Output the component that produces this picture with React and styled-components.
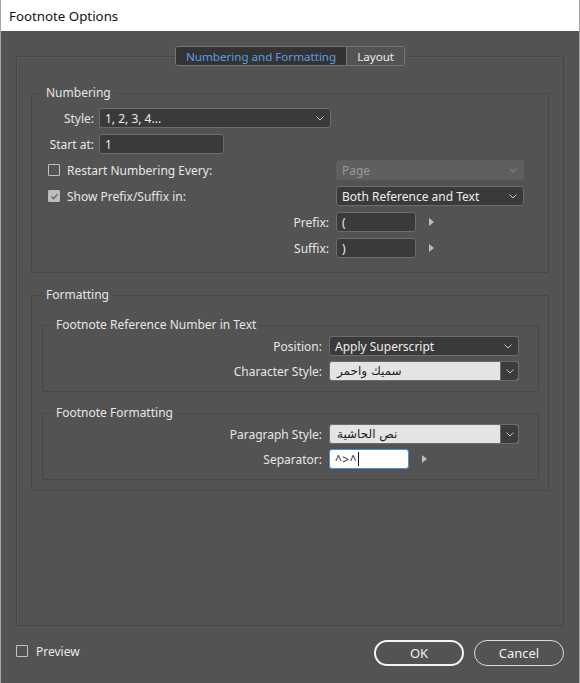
import React from "react"
import styled, { createGlobalStyle } from "styled-components"

const GlobalStyle = createGlobalStyle`
  html, body {
    margin: 0;
    padding: 0;
    background: #535353;
  }
  body {
    font-family: "Noto Sans", "Noto Sans CJK SC", sans-serif;
  }
  * {
    box-sizing: border-box;
  }
`

const Chevron = ({ color = "#c4c4c4" }) => (
  <svg width="8" height="5" viewBox="0 0 8 5">
    <polyline points="0.5,0.5 4,4 7.5,0.5" fill="none" stroke={color} strokeWidth="1" />
  </svg>
)

const Arrow = () => (
  <ArrowMark>
    <svg width="5" height="8" viewBox="0 0 5 8">
      <polygon points="0,0 5,4 0,8" fill="#bdbdbd" />
    </svg>
  </ArrowMark>
)

const Select = ({ width, value, disabled }) => (
  <SelectBox width={width} disabled={disabled}>
    <SelectText disabled={disabled}>{value}</SelectText>
    <Chevron color={disabled ? "#8c8c8c" : "#c4c4c4"} />
  </SelectBox>
)

const LightSelect = ({ width, value }) => (
  <LightBox width={width}>
    <LightText>{value}</LightText>
    <LightButton>
      <Chevron />
    </LightButton>
  </LightBox>
)

const Check = ({ checked }) => (
  <CheckBox checked={checked}>
    {checked && (
      <svg width="9" height="9" viewBox="0 0 9 9">
        <polyline points="1.5,4.5 3.6,6.6 7.5,2.2" fill="none" stroke="#6a6a6a" strokeWidth="1.5" />
      </svg>
    )}
  </CheckBox>
)

const App = () => (
  <>
    <GlobalStyle />
    <Window>
      <TitleBar>Footnote Options</TitleBar>
      <Body>
        <TabsRow>
          <TabGroup>
            <Tab active>Numbering and Formatting</Tab>
            <Tab>Layout</Tab>
          </TabGroup>
        </TabsRow>
        <Panel>
          <Group>
            <Legend offset={-6}>Numbering</Legend>
            <Rows gap={6}>
              <Row gap={5}>
                <Label width={46}>Style:</Label>
                <Select width={232} value="1, 2, 3, 4..." />
              </Row>
              <Row gap={5}>
                <Label width={46}>Start at:</Label>
                <TextInput width={125}>1</TextInput>
              </Row>
              <Row>
                <CheckCell width={288}>
                  <Check />
                  <CheckText>Restart Numbering Every:</CheckText>
                </CheckCell>
                <Select width={188} value="Page" disabled />
              </Row>
              <Row>
                <CheckCell width={288}>
                  <Check checked />
                  <CheckText>Show Prefix/Suffix in:</CheckText>
                </CheckCell>
                <Select width={188} value="Both Reference and Text" />
              </Row>
              <Row gap={7}>
                <Label width={281}>Prefix:</Label>
                <TextInput width={80}>(</TextInput>
                <Arrow />
              </Row>
              <Row gap={7}>
                <Label width={281}>Suffix:</Label>
                <TextInput width={80}>)</TextInput>
                <Arrow />
              </Row>
            </Rows>
          </Group>

          <OuterGroup>
            <Legend offset={0}>Formatting</Legend>
            <SubGroup>
              <Legend offset={9}>Footnote Reference Number in Text</Legend>
              <Rows gap={5}>
                <Row gap={7}>
                  <Label width={279}>Position:</Label>
                  <Select width={190} value="Apply Superscript" />
                </Row>
                <Row gap={7}>
                  <Label width={279}>Character Style:</Label>
                  <LightSelect width={190} value="سميك واحمر" />
                </Row>
              </Rows>
            </SubGroup>
            <SubGroup spaced>
              <Legend offset={9}>Footnote Formatting</Legend>
              <Rows gap={5}>
                <Row gap={7}>
                  <Label width={279}>Paragraph Style:</Label>
                  <LightSelect width={190} value="نص الحاشية" />
                </Row>
                <Row gap={7}>
                  <Label width={279}>Separator:</Label>
                  <FocusInput width={80}>
                    ^&gt;^<Caret />
                  </FocusInput>
                  <Arrow />
                </Row>
              </Rows>
            </SubGroup>
          </OuterGroup>
        </Panel>
      </Body>
      <Footer>
        <PreviewCell>
          <Check />
          <CheckText>Preview</CheckText>
        </PreviewCell>
        <Buttons>
          <Button primary>OK</Button>
          <Button>Cancel</Button>
        </Buttons>
      </Footer>
    </Window>
  </>
)

const Window = styled.div`
  width: 580px;
  height: 683px;
  background: #535353;
  border-left: 1px solid #a6a6a6;
  border-right: 1px solid #a6a6a6;
  display: flex;
  flex-direction: column;
  color: #e4e4e4;
  font-size: 12px;
`

const TitleBar = styled.div`
  height: 31px;
  background: #ffffff;
  color: #111;
  font-size: 13.3px;
  padding-left: 8px;
  display: flex;
  align-items: center;
`

const Body = styled.div`
  padding: 15px 15px 0 15px;
`

const TabsRow = styled.div`
  display: flex;
  justify-content: center;
  position: relative;
  z-index: 1;
  height: 20px;
`

const TabGroup = styled.div`
  display: flex;
  border: 1px solid #767676;
  border-radius: 3px;
  overflow: hidden;
  background: #535353;
`

const Tab = styled.div`
  display: flex;
  align-items: center;
  padding: 0 ${p => (p.active ? "10px" : "10px")};
  font-size: 11.6px;
  color: ${p => (p.active ? "#5d9ee0" : "#ededed")};
  background: ${p => (p.active ? "#333333" : "#535353")};
  & + & {
    border-left: 1px solid #767676;
  }
`

const Panel = styled.div`
  margin-top: -10px;
  height: 570px;
  border: 1px solid #464646;
  box-shadow: inset 1px 1px 0 #5b5b5b;
  padding: 29px 14px 0;
`

const Group = styled.fieldset`
  margin: 0;
  min-width: 0;
  border: 1px solid #474747;
  border-radius: 2px;
  padding: 8px 16px 14px;
`

const OuterGroup = styled(Group)`
  margin-top: 15px;
  padding: 16px 9px 10px 10px;
`

const SubGroup = styled(Group)`
  margin-top: ${p => (p.spaced ? "14px" : "0")};
  padding: 4px 10px 10px 0;
`

const Legend = styled.legend`
  margin-left: ${p => p.offset}px;
  padding: 0 4px;
  line-height: 14px;
  font-size: 12px;
  color: #e6e6e6;
`

const Rows = styled.div`
  display: flex;
  flex-direction: column;
  gap: ${p => p.gap}px;
`

const Row = styled.div`
  display: flex;
  align-items: center;
  height: 20px;
  gap: ${p => p.gap || 0}px;
`

const Label = styled.div`
  width: ${p => p.width}px;
  flex: none;
  text-align: right;
  white-space: nowrap;
  font-size: 12px;
  color: #e6e6e6;
`

const CheckCell = styled.div`
  width: ${p => p.width}px;
  flex: none;
  display: flex;
  align-items: center;
  gap: 7px;
`

const CheckBox = styled.span`
  width: 12px;
  height: 12px;
  flex: none;
  display: flex;
  align-items: center;
  justify-content: center;
  border: 1px solid ${p => (p.checked ? "#b9b9b9" : "#c2c2c2")};
  background: ${p => (p.checked ? "#bdbdbd" : "transparent")};
  border-radius: 1px;
`

const CheckText = styled.span`
  font-size: 12px;
  color: #e6e6e6;
  white-space: nowrap;
`

const SelectBox = styled.div`
  width: ${p => p.width}px;
  height: 20px;
  flex: none;
  display: flex;
  align-items: center;
  justify-content: space-between;
  padding: 0 6px 0 5px;
  border-radius: 3px;
  border: 1px solid ${p => (p.disabled ? "#5e5e5e" : "#6c6c6c")};
  background: ${p => (p.disabled ? "#5f5f5f" : "#3a3a3a")};
`

const SelectText = styled.span`
  font-size: 12px;
  color: ${p => (p.disabled ? "#9a9a9a" : "#ececec")};
  white-space: nowrap;
`

const TextInput = styled.div`
  width: ${p => p.width}px;
  height: 20px;
  flex: none;
  display: flex;
  align-items: center;
  padding: 0 5px;
  border-radius: 3px;
  border: 1px solid #6c6c6c;
  background: #3a3a3a;
  font-size: 12px;
  color: #ececec;
`

const FocusInput = styled(TextInput)`
  background: #ffffff;
  border: 1px solid #4a90d9;
  color: #222;
  font-size: 12px;
  letter-spacing: 0.5px;
`

const Caret = styled.span`
  display: inline-block;
  width: 1px;
  height: 14px;
  margin-left: 1px;
  background: #111;
`

const LightBox = styled.div`
  width: ${p => p.width}px;
  height: 20px;
  flex: none;
  display: flex;
  border: 1px solid #6c6c6c;
  border-radius: 3px;
  overflow: hidden;
  background: #e4e4e4;
`

const LightText = styled.div`
  flex: 1;
  display: flex;
  align-items: center;
  padding-left: 7px;
  font-size: 12px;
  color: #1e1e1e;
  font-family: "DejaVu Sans", "Noto Sans", sans-serif;
`

const LightButton = styled.div`
  width: 18px;
  display: flex;
  align-items: center;
  justify-content: center;
  background: #3c3c3c;
  border-left: 1px solid #6c6c6c;
`

const ArrowMark = styled.span`
  display: flex;
  align-items: center;
  margin-left: 6px;
`

const Footer = styled.div`
  flex: 1;
  display: flex;
  align-items: center;
  justify-content: space-between;
  padding: 0 15px 3px 15px;
`

const PreviewCell = styled.div`
  display: flex;
  align-items: center;
  gap: 8px;
  margin-top: -4px;
`

const Buttons = styled.div`
  display: flex;
  gap: 10px;
`

const Button = styled.button`
  width: 90px;
  height: 26px;
  border-radius: 13px;
  background: transparent;
  border: ${p => (p.primary ? "2px solid #f4f4f4" : "1px solid #dcdcdc")};
  color: #f0f0f0;
  font-family: "Noto Sans", sans-serif;
  font-size: 13px;
  padding: 0;
`

export default App
